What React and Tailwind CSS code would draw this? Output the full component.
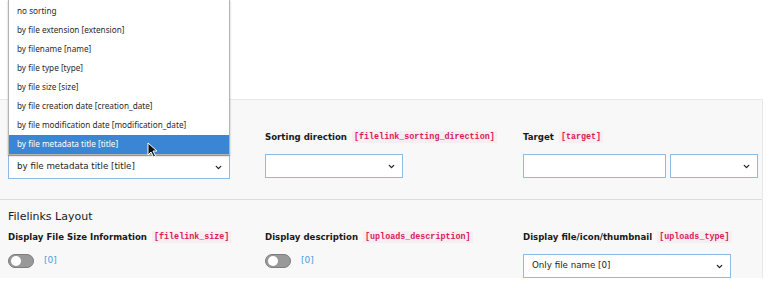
import { ChevronDown } from "lucide-react";

const sortOptions = [
  "no sorting",
  "by file extension [extension]",
  "by filename [name]",
  "by file type [type]",
  "by file size [size]",
  "by file creation date [creation_date]",
  "by file modification date [modification_date]",
  "by file metadata title [title]",
];

const Code = ({ children }) => (
  <code className="ml-[5px] bg-[#f7eef1] px-[2px] font-['Liberation_Mono',monospace] text-[8.4px] font-bold text-[#d81b57]">
    {children}
  </code>
);

const Label = ({ text, code }) => (
  <div className="flex h-[12px] items-center whitespace-nowrap text-[8.6px] font-bold text-[#1a1a1a]">
    {text}
    <Code>{code}</Code>
  </div>
);

const Select = ({ value, className }) => (
  <div
    className={`flex h-[24px] items-center justify-between border border-[#8dbbe8] bg-white pl-[8px] pr-[6px] text-[8.7px] text-[#222] ${className}`}
  >
    <span>{value}</span>
    <ChevronDown size={9} strokeWidth={3.5} className="text-[#222]" />
  </div>
);

const Toggle = () => (
  <div className="flex items-center gap-[10px]">
    <div className="flex h-[14px] w-[26px] items-center rounded-full border border-[#7d7d7d] bg-[#999] px-[2px]">
      <div className="h-[10px] w-[10px] rounded-full bg-white" />
    </div>
    <span className="text-[9px] text-[#4b9de0]">[0]</span>
  </div>
);

export default function App() {
  return (
    <div className="relative h-[289px] w-[768px] overflow-hidden bg-white font-['DejaVu_Sans',Verdana,sans-serif]">
      <div className="h-[99px]" />
      <div className="mr-[5px] border-r border-t border-[#e8e8e8] bg-[#f8f8f8]">
        {/* sorting row */}
        <div className="grid h-[99px] grid-cols-[257px_258px_1fr] pl-[8px] pt-[31px]">
          <div />
          <div className="flex flex-col gap-[11px]">
            <Label text="Sorting direction" code="[filelink_sorting_direction]" />
            <Select value="" className="w-[138px]" />
          </div>
          <div className="flex flex-col gap-[11px]">
            <Label text="Target" code="[target]" />
            <div className="flex gap-[4px]">
              <div className="h-[24px] w-[143px] border border-[#8dbbe8] bg-white" />
              <Select value="" className="w-[88px]" />
            </div>
          </div>
        </div>

        {/* layout section */}
        <div className="border-t border-[#dcdcdc] pl-[8px] pt-[10px]">
          <h3 className="h-[14px] text-[11px] leading-[14px] text-[#1a1a1a]">Filelinks Layout</h3>
          <div className="mt-[7px] grid grid-cols-[257px_258px_1fr]">
            <div className="flex flex-col gap-[11px]">
              <Label text="Display File Size Information" code="[filelink_size]" />
              <Toggle />
            </div>
            <div className="flex flex-col gap-[11px]">
              <Label text="Display description" code="[uploads_description]" />
              <Toggle />
            </div>
            <div className="flex flex-col gap-[11px]">
              <Label text="Display file/icon/thumbnail" code="[uploads_type]" />
              <Select value="Only file name [0]" className="w-[208px]" />
            </div>
          </div>
        </div>
      </div>

      {/* open sorting select */}
      <div className="absolute left-[8px] top-[155px] w-[222px]">
        <Select value="by file metadata title [title]" className="w-[222px]" />
      </div>
      <div className="absolute left-[8px] top-0 w-[222px] border border-t-0 border-[#b4b4b4] bg-white pt-[2px] font-['Noto_Sans',sans-serif] shadow-[0_1px_2px_rgba(0,0,0,0.25)]">
        {sortOptions.map((opt, i) => (
          <div
            key={opt}
            className={`flex h-[19px] items-center pl-[8px] text-[8.2px] ${
              i === sortOptions.length - 1 ? "bg-[#3a86d4] text-white" : "text-[#2a2a2a]"
            }`}
          >
            {opt}
          </div>
        ))}
      </div>

      {/* mouse pointer */}
      <svg className="absolute left-[147px] top-[142px]" width="11" height="16" viewBox="0 0 11 16">
        <path d="M1 1 L1 13 L4 10 L6.5 15 L8.5 14 L6 9 L10 9 Z" fill="#111" stroke="#fff" strokeWidth="1" />
      </svg>
    </div>
  );
}
